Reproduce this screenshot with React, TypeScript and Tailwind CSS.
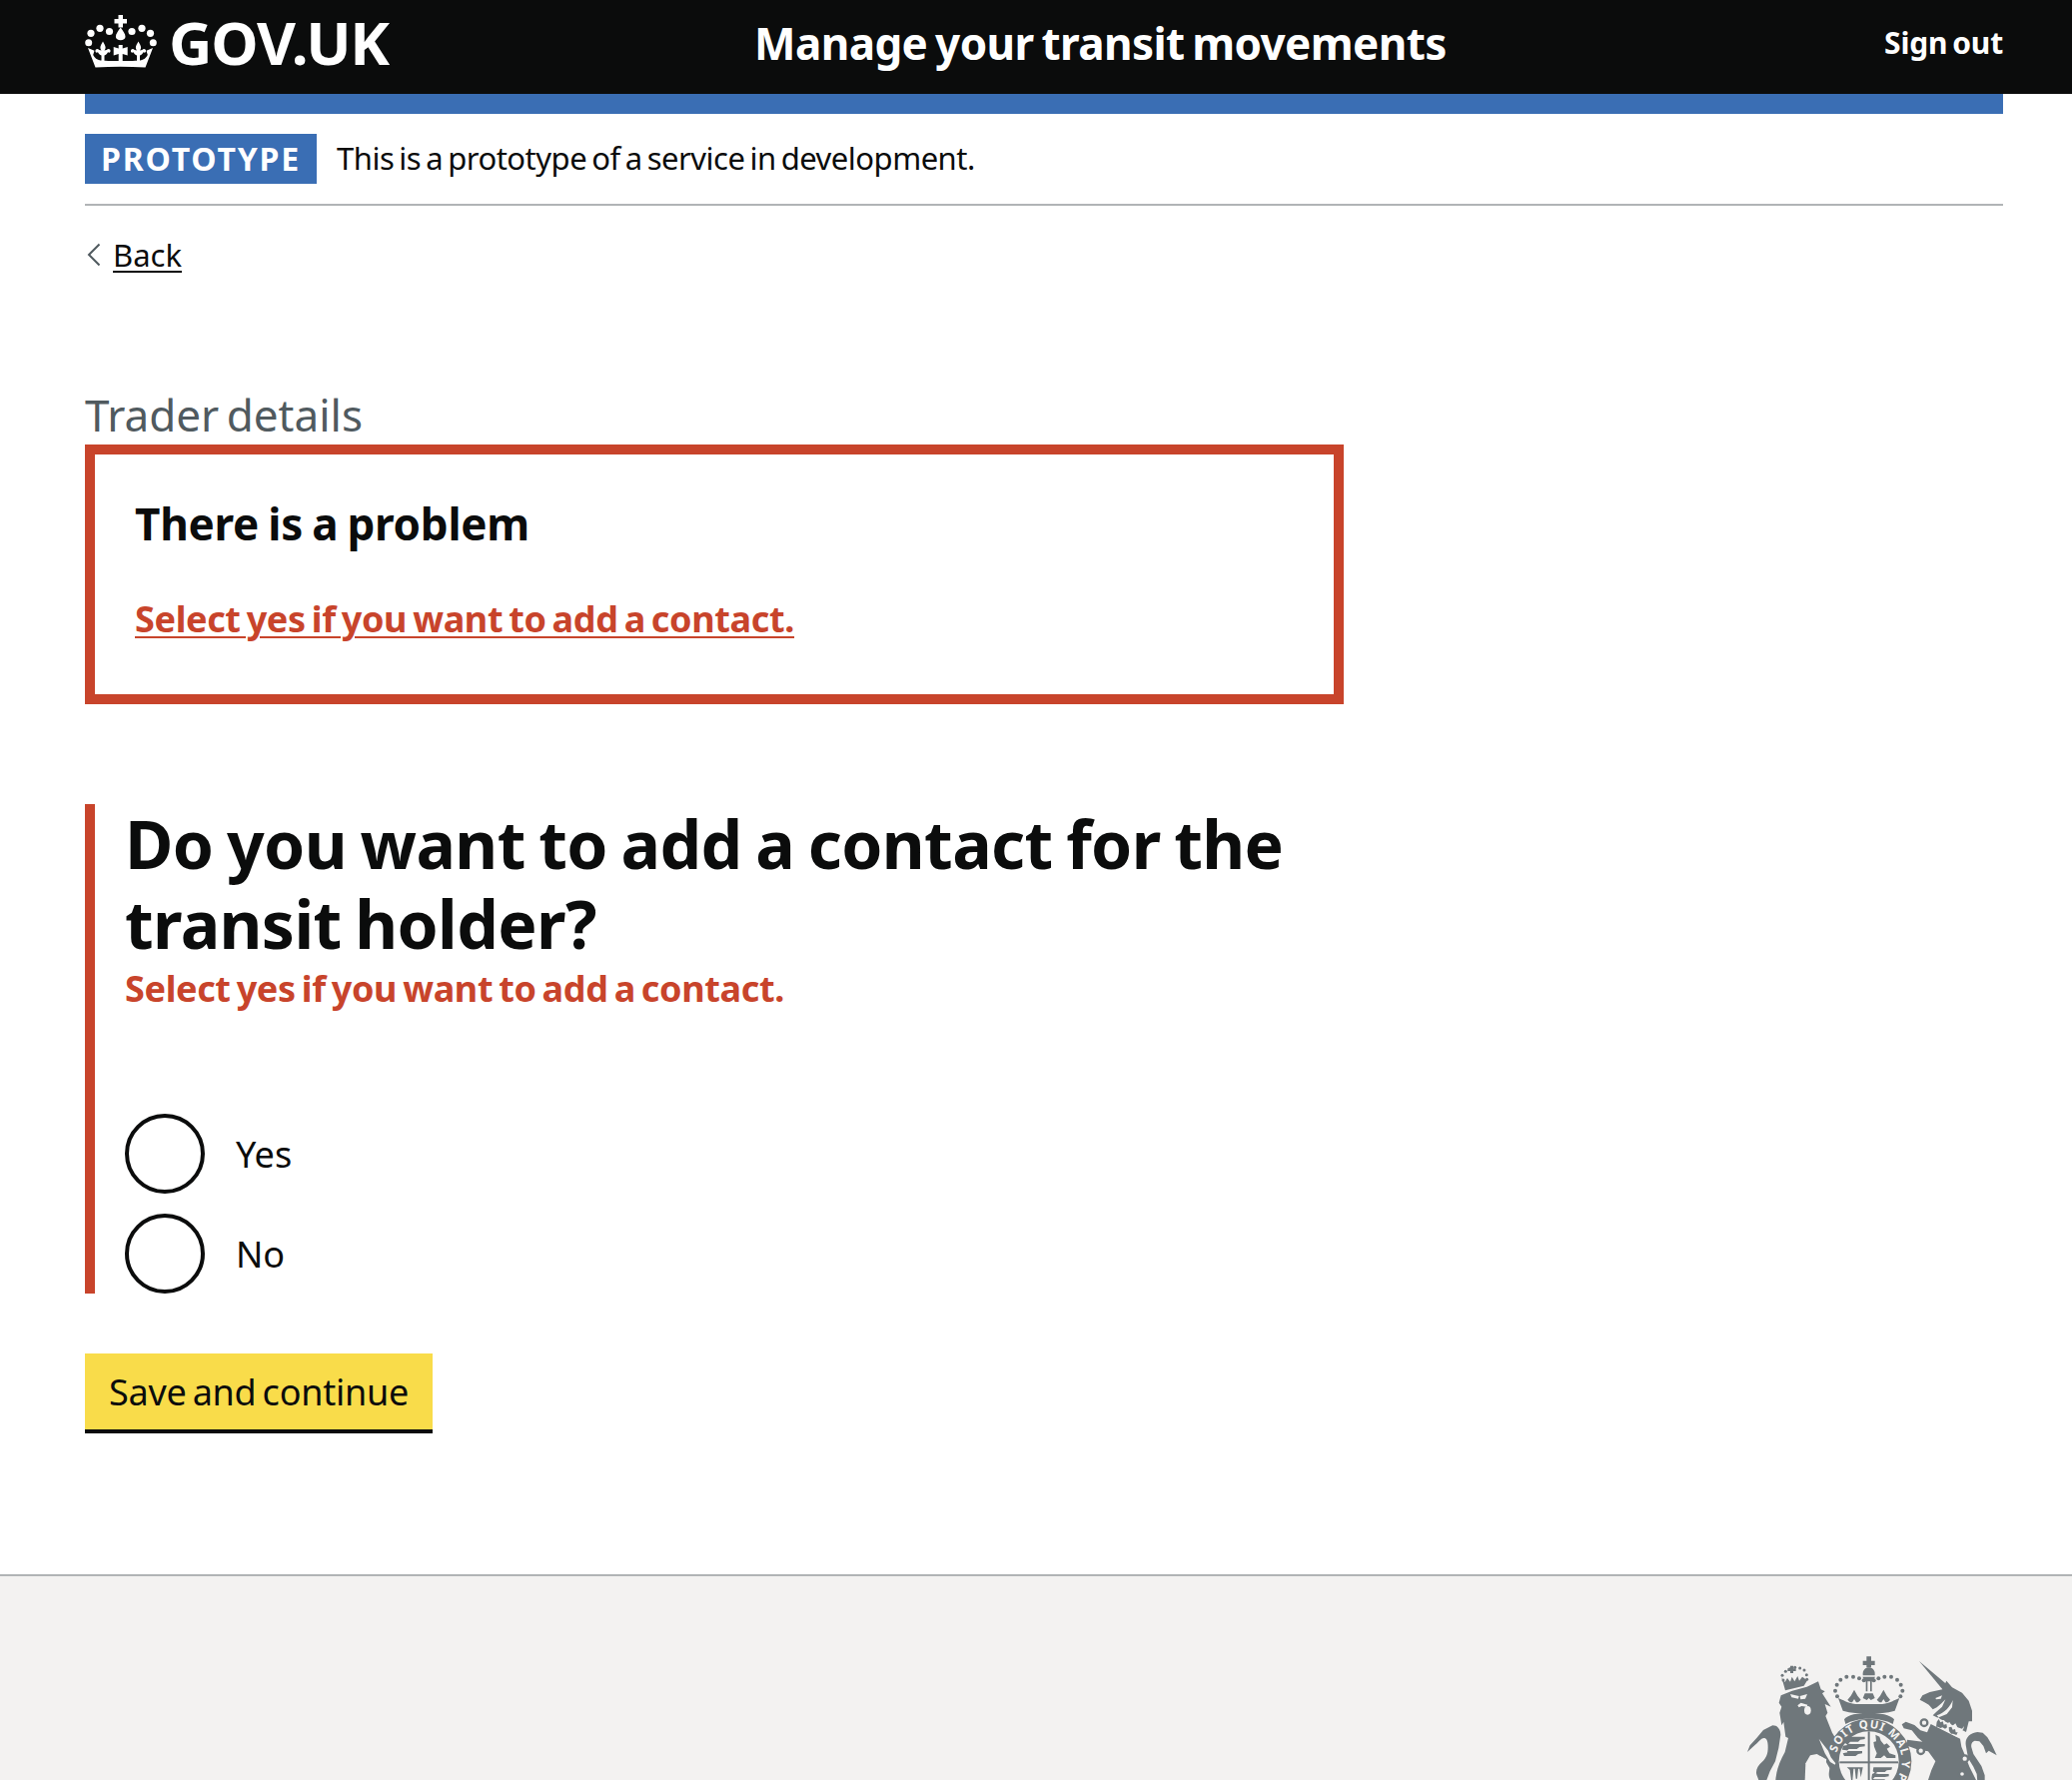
import React from "react";

const font = { fontFamily: '"Noto Sans", "Liberation Sans", sans-serif' };

function Fleur({ x }: { x: number }) {
  return (
    <path
      transform={`translate(${x} 0)`}
      d="M0 31.500c1.300 2.500 2.600 4.200 2.600 6 0 1.300-.6 2.300-1.200 3l2.400-.6c.8-1.200 2.600-1.300 3.400-.2.700 1 .4 2.500-.8 3.100l-1.400-.6c-.6 1.500-2 2.700-3.500 3.300V52h-3v-6.500c-1.500-.6-2.900-1.800-3.500-3.300l-1.400.6c-1.200-.6-1.500-2.100-.8-3.100.8-1.100 2.600-1 3.400.2l2.400.6c-.6-.7-1.200-1.700-1.200-3 0-1.800 1.300-3.500 2.600-6z"
    />
  );
}

function Crown() {
  return (
    <svg viewBox="0 0 100 70" className="w-[100px] h-[70px] shrink-0" fill="#fff" aria-hidden="true">
      <circle cx="21" cy="23.300" r="3.600" />
      <circle cx="30" cy="18.300" r="3.600" />
      <circle cx="39.500" cy="21.500" r="3.600" />
      <circle cx="62" cy="21.500" r="3.600" />
      <circle cx="72" cy="18.300" r="3.600" />
      <circle cx="80.500" cy="23.300" r="3.600" />
      <circle cx="18.700" cy="32.800" r="3.500" />
      <circle cx="83.300" cy="32.800" r="3.500" />
      <path d="M48.500 5h4.500v4h4v4.500h-4v4h-4.500v-4h-4v-4.500h4z" />
      <path d="M50.700 17.500c2.500 3.500 4.800 6.500 4.800 9.200a4.800 3.600 0 0 1-9.600 0c0-2.700 2.300-5.700 4.800-9.200z" />
      <Fleur x={33} />
      <Fleur x={68.500} />
      <path d="M48.700 35h4v3.500l5-1.500v8.500l-5-1.500v8h-4v-8l-5 1.500V37l5 1.500z" />
      <path d="M18 38l6.500 2.800-1.300 4.200c1.500 3 4 5 7.300 5.500 5 .7 35 .7 40 0 3.300-.5 5.800-2.500 7.300-5.500l-1.300-4.200L83 38l-7.500 19.500c-17 -1 -33-1-50 0z" />
    </svg>
  );
}

function Arms() {
  const g = "#6f777b";
  const bg = "#f3f2f1";
  const dots: [number, number][] = [
    [417, 235], [411, 218], [416, 200], [427, 185], [445, 176], [465, 176], [483, 181], [497, 187],
    [527, 187], [541, 181], [559, 176], [579, 176], [597, 185], [608, 200], [613, 218], [607, 235],
  ];
  const lionDots: [number, number][] = [
    [255, 186], [252, 172], [262, 160], [275, 152], [290, 148], [305, 150], [318, 156], [325, 170], [326, 184],
  ];
  return (
    <svg viewBox="0 0 1122 486" className="block w-[374px] h-[162px]" aria-hidden="true">
      <defs>
        <path id="garter" d="M415 404 A100 100 0 1 1 512 530" />
      </defs>
      <g fill={g}>
        {dots.map(([x, y]) => <circle key={`${x}${y}`} cx={x} cy={y} r="6" />)}
        {lionDots.map(([x, y]) => <circle key={`${x}${y}`} cx={x} cy={y} r="4.500" />)}
        {/* central crown */}
        <path d="M505 115h14v13h11v13h-11v7h-14v-7h-11v-13h11z" />
        <path d="M512 148c10 0 18 8 18 18v6h-36v-6c0-10 8-18 18-18z" />
        <path d="M493 176h38l-8 14h-2v30h-5v-30h-8v30h-5v-30h-2z" />
        <path d="M500 226h24l6 14-12 6-6-6-6 6-12-6z" />
        <path d="M468 215l10 18 10 12c-6 6-6 8-14 8l-6-10-6 10c-8 0-8-2-14-8l10-12z" />
        <path d="M556 215l10 18 10 12c-6 6-6 8-14 8l-6-10-6 10c-8 0-8-2-14-8l10-12z" />
        <path d="M420 240c16 6 20 10 34 14 20 6 38 4 58 4s38 2 58-4c14-4 18-8 34-14l-14 38c-24 8-50 8-78 8s-54 0-78-8z" />
        <path d="M438 304c8-14 42-20 74-20s66 6 76 20l-4 14c-14-10-46-16-72-16s-54 6-70 16z" />
        {/* lion crown */}
        <path d="M276 143h9v8h8v8h-8v6h-9v-6h-8v-8h8z" />
        <path d="M250 178l10 14 7-12 9 11 5-15 8 14 9-16 5 14 9-12 15 11-10 16-28 7-28 7z" />
        {/* lion head and mane */}
        <path d="M248 232l34-14 44-12 34-16 8 24 12 6-8 6 26 40-18-8 8 26-6 10 20 50 18 30-6 40-18 16-30-16-10 24 10 48H232c2-30 14-60 28-84l10-42-8-4-6-44-6 10-6-38 6-18-8-12z" />
        {/* lion tail */}
        <path d="M147 402l8-20 20-22 20-24 28-14c14 0 24 10 24 28l-6 40-10 40-16 30-10 26h-24l-6-16c-4-14 4-28 16-38 14-12 18-26 18-44 0-14-2-26-10-28-10-2-20 14-30 22z" />
        {/* unicorn horn */}
        <path d="M663 129L752 204l-17 12z" />
        {/* unicorn head and neck */}
        <path d="M733 214l12-26 17 20 30 16 20 24 10 30v32l-10 0-8 32-100-50 10-10 18-16 10-22-12 12-14 12-12 6-12-14-14-8-13-7 8-13 22-10z" />
        {/* unicorn body and rear */}
        <path d="M698 318l88 44 4 24 10 24 14 36 20 40H690l10-30 12-26-22-30-30-5-28-10-7 2 2-22 46 6-14-12-18-22-24-6-6-12 12-8 26 10 18 16 20 6z" />
        {/* unicorn tail */}
        <path d="M804 386c-6-24 10-42 34-44l16 2 14 14 12 20 16 34-24-14-8 8-8-22-12-14-14-2c-8 2-12 10-10 20l6 20 24 36 10 28v20h-22l-2-24-10-22-16-26z" />
        <circle cx="512" cy="430" r="128" />
      </g>

      {/* details knocked out of the silhouettes */}
      <g fill={bg}>
        <path d="M276 228l26 6-2 8-20-4z" />
        <path d="M305 234l22-6-6 14-14 2z" />
        <ellipse cx="328" cy="277" rx="10" ry="13" />
        <path d="M298 262l10-8 12 4 8 2-2 6-16-2-8 4z" />
        <path d="M712 240l20-8-4 10-14 2z" />
        <path d="M716 292c24-8 40-26 48-46l-2 22-16 20-24 10z" />
        <path d="M698 300l6 18 74 40 18-26 2-8-6 8-14-4-6-12-10 8-8-12-10 6-6-12-10 2-6-10-12 4-6-8z" />
        <path d="M362 362l28 36 8 20 14 18-2 4-14-8-16-26z" />
        <path d="M322 436l14-24 20-4 20 12 18 30-4 36H320z" />
      </g>
      <g fill="none" stroke={g} strokeWidth="7">
        <circle cx="678" cy="314" r="10" fill={bg} />
        <circle cx="668" cy="398" r="10" fill={bg} />
        <circle cx="800" cy="422" r="10" fill={bg} />
        <circle cx="792" cy="468" r="9" fill={bg} />
      </g>
      <g fill={g}>
        <path d="M716 311l6-8 5 10 7-3 3 10 8-2 2 10-6 4-8-4-6 2-8-4-5 0z" />
        <path d="M752 328l8-2 4 9 7-2 2 10 6 0-4 8-10-4-6 0-6-8z" />
      </g>

      <text fontSize="34" fontWeight="700" fill={bg} letterSpacing="3" style={{ fontFamily: '"Noto Sans", sans-serif' }}>
        <textPath href="#garter">SOIT QUI MAL Y PENSE</textPath>
      </text>
      <circle cx="512" cy="430" r="90" fill={bg} />
      <g fill={g}>
        <rect x="509" y="340" width="6" height="146" />
        <rect x="424" y="430" width="176" height="6" />
        <path d="M440 356h60v7l-14 2-6 6h-24l-6 6 10 1h40v7l-16 2-8 6h-24l-6 5 8 1h38v7l-12 2-8 6h-34l-4-8 14-3-2-6-14-2 2-12 14-2-6-5-6-1z" />
        <path d="M532 350l12 6 4 12 10 12 8-4 10 10-10 6 8 14 18 6v8h-26l-8-8-10 8h-18l6-14-8-20-2-14 8-2z" />
        <path d="M446 448h48l-6 30-4-26h-4l-3 30h-4l-3-30h-4l-3 34h-4l-4-30z" />
        <path d="M526 448h56l-2 7-14 2-6 5h-22l-6 4 8 2h32v7l-12 2h-30l-6 6 6 1h30v6h-38l-2-10 2-12 8-4-6-4z" />
      </g>
    </svg>
  );
}

export default function App() {
  return (
    <div className="h-[1782px] overflow-hidden bg-white text-[#0b0c0c] flex flex-col" style={font}>
      <header className="h-[94px] shrink-0 bg-[#0b0c0c] text-white pl-[85px] pr-[69px] flex items-center">
        <div className="w-[670px] shrink-0 flex items-center">
          <div className="ml-[-15px] mr-[-1px] mt-[-4px]"><Crown /></div>
          <span className="text-[60px] font-bold leading-none tracking-[-1.2px] mt-[-11px]">GOV.UK</span>
        </div>
        <a className="flex-1 text-[44px] leading-[52px] font-bold whitespace-nowrap tracking-[-0.6px] [word-spacing:-3px] mt-[-9px]">Manage your transit movements</a>
        <a className="text-[30px] font-bold leading-none tracking-[-0.2px] [word-spacing:-2.500px] mt-[-8px]">Sign out</a>
      </header>

      <main className="pl-[85px] pr-[69px] flex-1">
        <div className="h-[20px] bg-[#3a6eb4]" />
        <div className="mt-[20px] pb-[20px] border-b-2 border-[#b1b4b6] flex items-center gap-[20px]">
          <strong className="h-[50px] w-[232px] bg-[#3a6eb4] text-white text-[32px] leading-[50px] font-bold tracking-[1.800px] text-center">PROTOTYPE</strong>
          <span className="text-[31px] leading-[50px] tracking-[-0.5px] [word-spacing:-2.500px] mt-[-2px]">This is a prototype of a service in development.</span>
        </div>

        <a className="mt-[29px] flex items-center text-[31px] leading-[40px] h-[40px]">
          <svg viewBox="0 0 14 24" className="w-[14px] h-[24px] ml-[2px] mr-[12px]" fill="none" stroke="#505a5f" strokeWidth="2">
            <path d="M12.500 1.500L2 12l10.500 10.500" />
          </svg>
          <span className="underline underline-offset-[4px] decoration-2">Back</span>
        </a>

        <div className="mt-[110px] text-[#505a5f] text-[44px] leading-[60px] [word-spacing:-4px]">Trader details</div>

        <section className="w-[1260px] h-[260px] border-[10px] border-[#c8442b] px-[40px] pt-[44px]">
          <h2 className="text-[44px] leading-[50px] font-bold tracking-[-0.25px] [word-spacing:-2px]">There is a problem</h2>
          <a className="block mt-[46px] text-[#c8442b] text-[36px] leading-[50px] font-bold underline underline-offset-[4px] decoration-2 tracking-[-0.35px] [word-spacing:-3px]">Select yes if you want to add a contact.</a>
        </section>

        <section className="w-[1260px] mt-[100px] pt-[1px] border-l-[10px] border-[#c8442b] pl-[30px]">
          <h1 className="text-[66px] leading-[80px] font-bold tracking-[-0.6px] [word-spacing:-3px] mt-[-2px]">Do you want to add a contact for the transit holder?</h1>
          <p className="text-[#c8442b] text-[36px] leading-[50px] font-bold tracking-[-0.35px] [word-spacing:-3px] mt-[1px]">Select yes if you want to add a contact.</p>
          <div className="mt-[100px] flex flex-col gap-[20px]">
            <label className="flex items-center h-[80px]">
              <span className="w-[80px] h-[80px] rounded-full border-4 border-[#0b0c0c] bg-white" />
              <span className="ml-[31px] mt-[2px] text-[36px] leading-[50px]">Yes</span>
            </label>
            <label className="flex items-center h-[80px]">
              <span className="w-[80px] h-[80px] rounded-full border-4 border-[#0b0c0c] bg-white" />
              <span className="ml-[31px] mt-[2px] text-[36px] leading-[50px]">No</span>
            </label>
          </div>
        </section>

        <button className="mt-[60px] pt-[2px] block h-[80px] w-[348px] bg-[#f9dc4a] border-b-4 border-[#0b0c0c] text-[36px] leading-[50px] text-[#0b0c0c] text-center tracking-[-0.25px] [word-spacing:-3px]">Save and continue</button>
      </main>

      <footer className="h-[206px] shrink-0 bg-[#f3f2f1] border-t-2 border-[#b1b4b6] flex justify-end overflow-hidden">
        <div className="mt-[42px]"><Arms /></div>
      </footer>
    </div>
  );
}
